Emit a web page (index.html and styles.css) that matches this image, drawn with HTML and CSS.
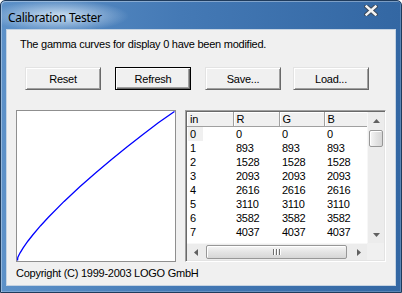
FILE: index.html
```html
<!DOCTYPE html>
<html lang="en">
<head>
    <meta charset="UTF-8">
    <title>Calibration Tester</title>
    <link rel="stylesheet" href="styles.css">
</head>
<body>
    <div class="window">
        <div class="titlebar">
            <span class="title">Calibration Tester</span>
            <svg class="close" width="14" height="11" viewBox="0 0 14 11">
                <path d="M2.5 1.5 L11.5 9.5 M11.5 1.5 L2.5 9.5" stroke="#3b4a5c" stroke-width="4.4" stroke-linecap="square"/>
                <path d="M2.5 1.5 L11.5 9.5 M11.5 1.5 L2.5 9.5" stroke="#f4f4f4" stroke-width="2.4" stroke-linecap="square"/>
            </svg>
        </div>

        <div class="client">
            <p class="message">The gamma curves for display 0 have been modified.</p>

            <div class="buttons">
                <button class="btn">Reset</button>
                <button class="btn default">Refresh</button>
                <button class="btn">Save...</button>
                <button class="btn load">Load...</button>
            </div>

            <div class="panels">
                <div class="graph">
                    <svg width="158" height="150" viewBox="0 0 158 150">
                        <!-- 16 bit ramp with gamma 0.775 -->
                        <polyline fill="none" stroke="#0000ff" stroke-width="1.3"
                            points="0.5,149.5 0.8,146.5 1.6,144.8 3.1,141.8 6.3,136.7 11,130 15.7,124 23.6,114.7 31.4,106.2 47.1,90.4 62.8,75.8 78.5,61.9 94.2,48.7 109.9,36 125.6,23.7 141.3,11.7 157.5,0.5"/>
                    </svg>
                </div>

                <div class="list">
                    <div class="list-view">
                        <table>
                            <colgroup>
                                <col class="c-in"><col class="c-r"><col class="c-g"><col class="c-b">
                            </colgroup>
                            <thead>
                                <tr><th>in</th><th>R</th><th>G</th><th>B</th></tr>
                            </thead>
                            <tbody>
                                <tr><td><span class="focus">0</span></td><td>0</td><td>0</td><td>0</td></tr>
                                <tr><td>1</td><td>893</td><td>893</td><td>893</td></tr>
                                <tr><td>2</td><td>1528</td><td>1528</td><td>1528</td></tr>
                                <tr><td>3</td><td>2093</td><td>2093</td><td>2093</td></tr>
                                <tr><td>4</td><td>2616</td><td>2616</td><td>2616</td></tr>
                                <tr><td>5</td><td>3110</td><td>3110</td><td>3110</td></tr>
                                <tr><td>6</td><td>3582</td><td>3582</td><td>3582</td></tr>
                                <tr><td>7</td><td>4037</td><td>4037</td><td>4037</td></tr>
                            </tbody>
                        </table>
                    </div>

                    <div class="vscroll">
                        <div class="arrow">
                            <svg width="7" height="4" viewBox="0 0 7 4"><polygon points="3.5,0 7,4 0,4" fill="#606060"/></svg>
                        </div>
                        <div class="track">
                            <div class="thumb"></div>
                        </div>
                        <div class="arrow">
                            <svg width="7" height="4" viewBox="0 0 7 4"><polygon points="0,0 7,0 3.5,4" fill="#606060"/></svg>
                        </div>
                    </div>

                    <div class="hscroll">
                        <div class="arrow">
                            <svg width="4" height="7" viewBox="0 0 4 7"><polygon points="0,3.5 4,0 4,7" fill="#606060"/></svg>
                        </div>
                        <div class="track">
                            <div class="thumb">
                                <span class="grip"></span><span class="grip"></span><span class="grip"></span>
                            </div>
                        </div>
                        <div class="arrow">
                            <svg width="4" height="7" viewBox="0 0 4 7"><polygon points="0,0 4,3.5 0,7" fill="#606060"/></svg>
                        </div>
                    </div>

                    <div class="corner"></div>
                </div>
            </div>

            <p class="copyright">Copyright (C) 1999-2003 LOGO GmbH</p>
        </div>
    </div>
</body>
</html>
```

FILE: styles.css
```css
body {
    margin: 0;
    padding: 0;
    background-color: #fff;
    font-family: "Liberation Sans", Arial, sans-serif;
    font-size: 11px;
    letter-spacing: -0.25px;
    color: #000;
}

.window {
    box-sizing: border-box;
    width: 402px;
    height: 293px;
    display: flex;
    flex-direction: column;
    padding: 0 5px 6px 5px;
    border: 1px solid #1f3b5c;
    border-radius: 5px 5px 0 0;
    background:
        radial-gradient(ellipse 70px 16px at 58px 15px, rgba(225, 238, 250, 0.85), rgba(225, 238, 250, 0) 100%),
        linear-gradient(90deg, #5d91c8 0%, #4479b5 45%, #3367a3 100%);
    box-shadow: inset 1px 1px 0 rgba(255, 255, 255, 0.35), inset -1px -1px 0 rgba(255, 255, 255, 0.2);
}

.titlebar {
    height: 28px;
    display: flex;
    align-items: center;
    justify-content: space-between;
    padding: 0 0 0 2px;
}
.title {
    font-family: "Noto Sans", sans-serif;
    font-size: 12px;
    letter-spacing: -0.3px;
    color: #000;
    margin-top: 4px;
}
.close {
    margin: -10px 18px 0 0;
}

.client {
    flex: 1;
    display: flex;
    flex-direction: column;
    background-color: #f0f0f0;
    border: 1px solid #c5d3e2;
}

.message {
    margin: 8px 0 0 13px;
    line-height: 13px;
}

.buttons {
    display: flex;
    gap: 14px;
    margin: 16px 0 0 18px;
}
.btn {
    box-sizing: border-box;
    width: 76px;
    height: 23px;
    padding: 0;
    font-family: inherit;
    font-size: 11px;
    letter-spacing: inherit;
    color: #000;
    background-color: #f0f0f0;
    border: 1px solid;
    border-color: #e3e3e3 #696969 #696969 #e3e3e3;
    box-shadow: inset 1px 1px 0 #fff, inset -1px -1px 0 #a0a0a0;
}
.btn.default {
    border-color: #000;
    box-shadow: inset 1px 1px 0 #fff, inset -1px -1px 0 #696969, inset -2px -2px 0 #a0a0a0;
}
.btn.load {
    margin-left: -2px;
}

.panels {
    display: flex;
    gap: 9px;
    margin: 20px 0 0 9px;
}

.graph {
    box-sizing: border-box;
    width: 160px;
    height: 152px;
    background-color: #fff;
    border: 1px solid #8f8f8f;
}
.graph svg {
    display: block;
}

.list {
    box-sizing: border-box;
    width: 201px;
    height: 152px;
    display: grid;
    grid-template-columns: 1fr 17px;
    grid-template-rows: 1fr 17px;
    background-color: #fff;
    border: 1px solid;
    border-color: #a0a0a0 #fff #fff #a0a0a0;
    box-shadow: inset 1px 1px 0 #696969, inset -1px -1px 0 #e3e3e3;
    padding: 1px;
}

.list-view {
    overflow: hidden;
}
.list-view table {
    border-collapse: collapse;
    table-layout: fixed;
    width: 183px;
}
.c-in, .c-r, .c-b {
    width: 46px;
}
.c-g {
    width: 45px;
}
.list-view th {
    height: 14px;
    padding: 0 0 0 3px;
    font-weight: normal;
    text-align: left;
    line-height: 13px;
    background-color: #f0f0f0;
    border-right: 1px solid #a0a0a0;
    border-bottom: 1px solid #a0a0a0;
    box-shadow: inset 1px 1px 0 #fff;
}
.list-view td {
    height: 14px;
    padding: 0 0 0 3px;
    line-height: 14px;
    white-space: nowrap;
}
.focus {
    display: inline-block;
    margin-left: -2px;
    padding: 0 7px 0 2px;
    background-color: #f0f0f0;
}

.vscroll {
    display: flex;
    flex-direction: column;
    background-color: #ececec;
    border-left: 1px solid #f7f7f7;
}
.vscroll .arrow, .hscroll .arrow {
    flex: 0 0 17px;
    display: flex;
    align-items: center;
    justify-content: center;
}
.vscroll .track {
    flex: 1;
    padding: 1px 0;
}
.vscroll .thumb {
    box-sizing: border-box;
    height: 17px;
    margin: 0 1px;
    border: 1px solid #979797;
    border-radius: 2px;
    background: linear-gradient(90deg, #f6f6f6, #e4e4e4 50%, #d6d6d6);
    box-shadow: inset 1px 1px 0 #fff;
}

.hscroll {
    display: flex;
    background-color: #ececec;
    border-top: 1px solid #f7f7f7;
}
.hscroll .track {
    flex: 1;
    padding: 0 1px;
    display: flex;
}
.hscroll .thumb {
    box-sizing: border-box;
    flex: 1;
    margin: 1px 2px 1px 1px;
    display: flex;
    gap: 2px;
    align-items: center;
    justify-content: center;
    border: 1px solid #979797;
    border-radius: 2px;
    background: linear-gradient(180deg, #f6f6f6, #e4e4e4 50%, #d6d6d6);
    box-shadow: inset 1px 1px 0 #fff;
}
.grip {
    width: 1px;
    height: 6px;
    background-color: #6e6e6e;
    box-shadow: 1px 0 0 #fff;
}

.corner {
    background-color: #f0f0f0;
}

.copyright {
    margin: 5px 0 0 9px;
    line-height: 13px;
}
```
